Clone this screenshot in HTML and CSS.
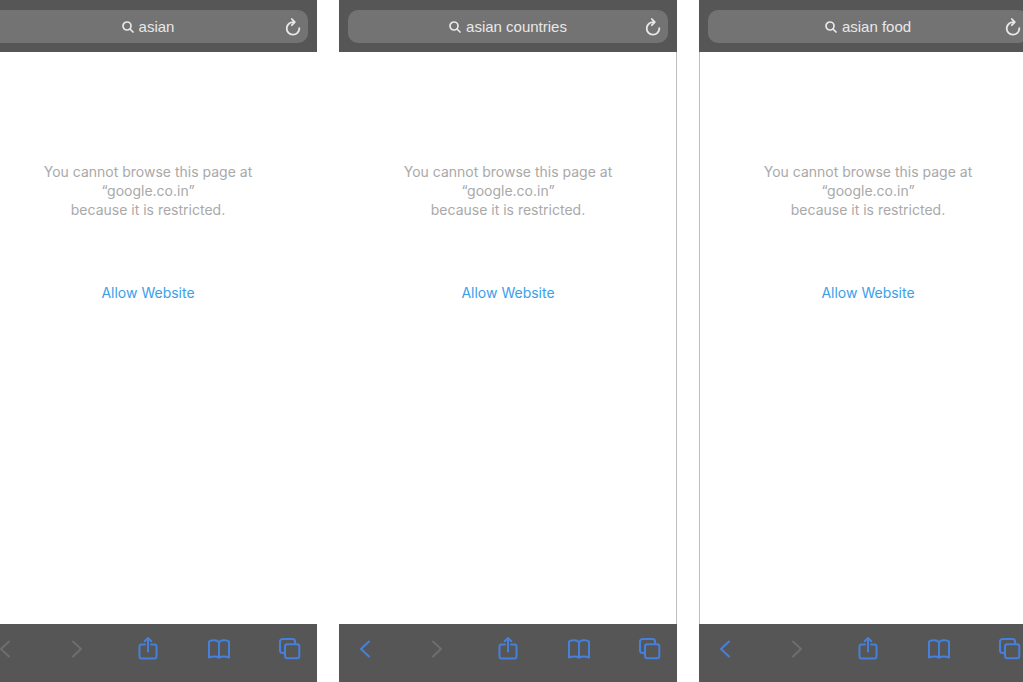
FILE: index.html
```html
<!DOCTYPE html>
<html lang="en">
<head>
<meta charset="utf-8">
<meta name="viewport" content="width=device-width, initial-scale=1">
<title>Restricted searches</title>
<link rel="stylesheet" href="styles.css">
</head>
<body>
<svg class="sprite" aria-hidden="true">
  <symbol id="search" viewBox="0 0 12 12"><g stroke-width="1.7"><circle cx="5" cy="5" r="4"/><path d="M8 8l3 3"/></g></symbol>
  <symbol id="reload" viewBox="0 0 18 20"><g stroke-width="1.8"><path d="M10 5.200A6.300 6.300 0 1 0 15.300 11.200"/><path d="M7.800 2l3 3.200L7.800 8.200"/></g></symbol>
  <symbol id="back" viewBox="0 0 26 26"><path d="M17 5.500L9 13l8 7.500"/></symbol>
  <symbol id="forward" viewBox="0 0 26 26"><path d="M10 5.500l8 7.500-8 7.500"/></symbol>
  <symbol id="share" viewBox="0 0 26 26"><path d="M10 8.500H6.500a2 2 0 0 0-2 2v10a2 2 0 0 0 2 2h13a2 2 0 0 0 2-2v-10a2 2 0 0 0-2-2H16M13 15.500V2M9.700 5.200L13 2l3.300 3.200"/></symbol>
  <symbol id="book" viewBox="0 0 26 26"><path d="M13 6.500C11.500 3.800 5.500 3.600 3 5.600v16c3-1.600 8-1.600 10 0 2-1.600 7-1.600 10 0v-16C20.500 3.600 14.500 3.800 13 6.500zM13 6.500v15"/></symbol>
  <symbol id="tabs" viewBox="0 0 26 26"><rect x="8" y="8.300" width="14.300" height="14" rx="2.200"/><path d="M8 17H5.500A2.500 2.500 0 0 1 3 14.500v-9A2.500 2.500 0 0 1 5.500 3h10A2.500 2.500 0 0 1 18 5.500V8"/></symbol>
</svg>
<main class="gallery">
  <section class="phone">
    <header class="topbar">
      <div class="field">
        <label class="query"><svg class="glass" role="img" aria-label="Search"><use href="#search"/></svg><input class="query-text" type="text" value="asian"></label>
        <button class="reload" type="button" aria-label="Reload"><svg><use href="#reload"/></svg></button>
      </div>
    </header>
    <div class="page">
      <p class="message">You cannot browse this page at<br>“google.co.in”<br>because it is restricted.</p>
      <a class="allow" href="#">Allow Website</a>
    </div>
    <nav class="toolbar">
      <button class="tool" type="button" aria-label="Back" disabled><svg><use href="#back"/></svg></button>
      <button class="tool" type="button" aria-label="Forward" disabled><svg><use href="#forward"/></svg></button>
      <button class="tool" type="button" aria-label="Share"><svg><use href="#share"/></svg></button>
      <button class="tool" type="button" aria-label="Bookmarks"><svg><use href="#book"/></svg></button>
      <button class="tool" type="button" aria-label="Tabs"><svg><use href="#tabs"/></svg></button>
    </nav>
  </section>
  <section class="phone edge-right">
    <header class="topbar">
      <div class="field">
        <label class="query"><svg class="glass" role="img" aria-label="Search"><use href="#search"/></svg><input class="query-text" type="text" value="asian countries"></label>
        <button class="reload" type="button" aria-label="Reload"><svg><use href="#reload"/></svg></button>
      </div>
    </header>
    <div class="page">
      <p class="message">You cannot browse this page at<br>“google.co.in”<br>because it is restricted.</p>
      <a class="allow" href="#">Allow Website</a>
    </div>
    <nav class="toolbar">
      <button class="tool" type="button" aria-label="Back"><svg><use href="#back"/></svg></button>
      <button class="tool" type="button" aria-label="Forward" disabled><svg><use href="#forward"/></svg></button>
      <button class="tool" type="button" aria-label="Share"><svg><use href="#share"/></svg></button>
      <button class="tool" type="button" aria-label="Bookmarks"><svg><use href="#book"/></svg></button>
      <button class="tool" type="button" aria-label="Tabs"><svg><use href="#tabs"/></svg></button>
    </nav>
  </section>
  <section class="phone edge-left">
    <header class="topbar">
      <div class="field">
        <label class="query"><svg class="glass" role="img" aria-label="Search"><use href="#search"/></svg><input class="query-text" type="text" value="asian food"></label>
        <button class="reload" type="button" aria-label="Reload"><svg><use href="#reload"/></svg></button>
      </div>
    </header>
    <div class="page">
      <p class="message">You cannot browse this page at<br>“google.co.in”<br>because it is restricted.</p>
      <a class="allow" href="#">Allow Website</a>
    </div>
    <nav class="toolbar">
      <button class="tool" type="button" aria-label="Back"><svg><use href="#back"/></svg></button>
      <button class="tool" type="button" aria-label="Forward" disabled><svg><use href="#forward"/></svg></button>
      <button class="tool" type="button" aria-label="Share"><svg><use href="#share"/></svg></button>
      <button class="tool" type="button" aria-label="Bookmarks"><svg><use href="#book"/></svg></button>
      <button class="tool" type="button" aria-label="Tabs"><svg><use href="#tabs"/></svg></button>
    </nav>
  </section>
</main>
</body>
</html>
```
FILE: styles.css
```css
* {
  box-sizing: border-box;
}

body {
  margin: 0;
  overflow-x: hidden;
  background: #fff;
  font-family: Inter, "Liberation Sans", sans-serif;
}

.sprite {
  display: none;
}

svg {
  display: block;
  fill: none;
  stroke: currentColor;
  stroke-linecap: round;
  stroke-linejoin: round;
}

button {
  display: block;
  padding: 0;
  border: 0;
  background: none;
}

/* The outer phones run past both sides of the window. */
.gallery {
  display: grid;
  grid-template-columns: repeat(3, minmax(0, 1fr));
  gap: 22px;
  min-height: 100vh;
  margin: 0 -14px 0 -21px;
}

.phone {
  display: flex;
  flex-direction: column;
}

.edge-right {
  box-shadow: inset -1px 0 #bdbdbd;
}

.edge-left {
  box-shadow: inset 1px 0 #bdbdbd;
}

.topbar {
  padding: 10px 9px 9px;
  background: #565656;
}

.field {
  display: grid;
  grid-template-columns: 24px 1fr 24px;
  align-items: center;
  height: 33px;
  border-radius: 10px;
  background: #737373;
  color: #e8e8e8;
}

.query {
  display: flex;
  grid-column: 2;
  align-items: center;
  justify-content: center;
  gap: 5px;
}

.glass {
  width: 12px;
  height: 12px;
}

.query-text {
  field-sizing: content;
  padding: 0;
  border: 0;
  background: none;
  color: inherit;
  font: 15px/20px "Liberation Sans", Arial, sans-serif;
}

.reload {
  color: inherit;
}

.reload svg {
  width: 18px;
  height: 20px;
}

.page {
  display: flex;
  flex: 1;
  flex-direction: column;
  align-items: center;
  padding-top: 110px;
}

.message {
  margin: 0 0 64px;
  color: #a9a9a9;
  font-size: 14px;
  line-height: 19px;
  text-align: center;
}

.allow {
  color: #3aa0ea;
  font-size: 14px;
  line-height: 19px;
  text-decoration: none;
}

.toolbar {
  display: flex;
  justify-content: space-between;
  padding: 12px 14px 20px 13px;
  background: #565656;
}

.tool {
  color: #4480dc;
}

.tool:disabled {
  color: #6e6e6e;
}

.tool svg {
  width: 26px;
  height: 26px;
  stroke-width: 2;
}
```
